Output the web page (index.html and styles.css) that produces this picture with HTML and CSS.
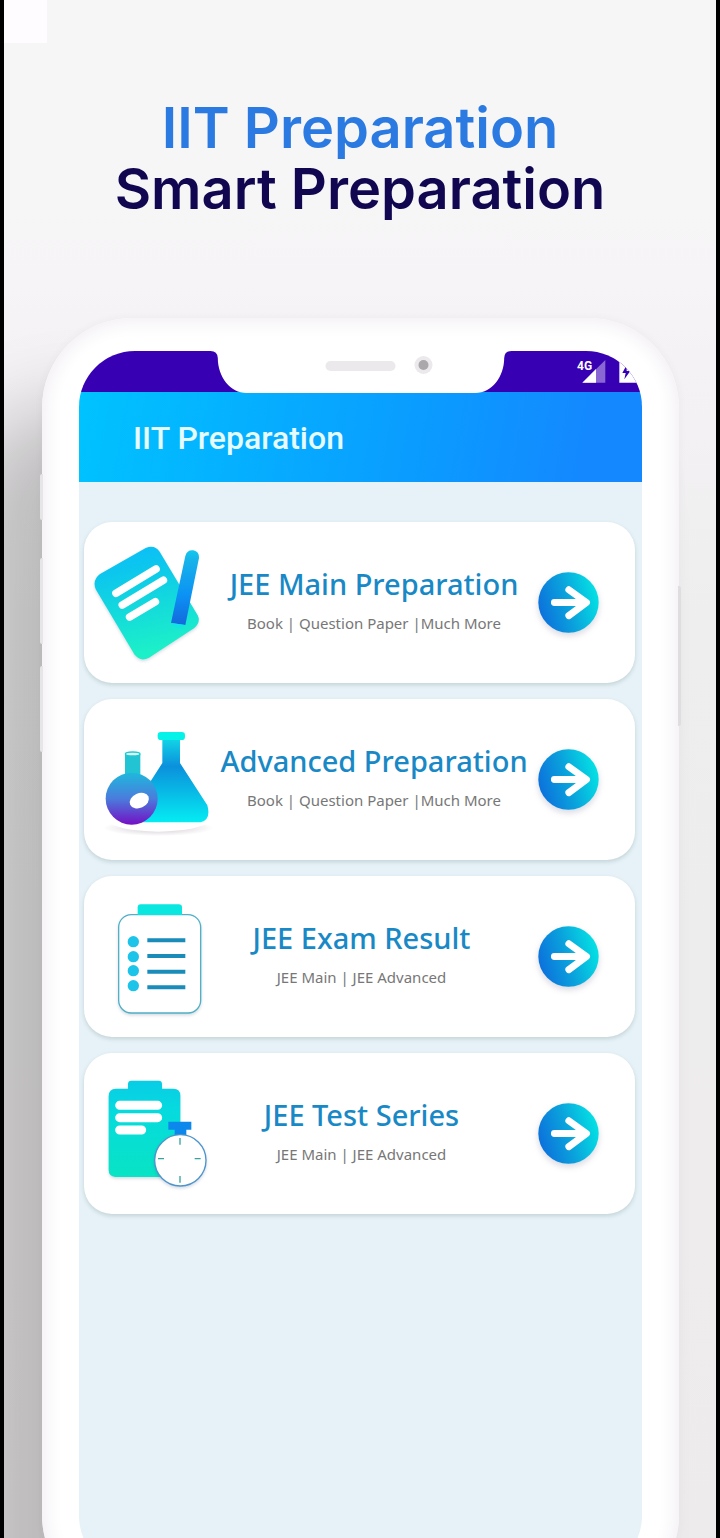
FILE: index.html
```html
<!DOCTYPE html>
<html lang="en">
<head>
<meta charset="utf-8">
<meta name="viewport" content="width=device-width, initial-scale=1">
<title>IIT Preparation</title>
<link rel="stylesheet" href="styles.css">
</head>
<body>
<div class="stage">
  <div class="corner-tile"></div>
  <header class="headline">
    <h1 class="headline-text"><span class="headline-accent">IIT Preparation</span><span>Smart Preparation</span></h1>
  </header>

  <div class="phone">
    <i class="side-key key-mute"></i>
    <i class="side-key key-up"></i>
    <i class="side-key key-down"></i>
    <i class="side-key key-power"></i>
    <div class="screen">
      <div class="status-bar">
        <svg class="status-icons" viewBox="648 153 198 123" aria-label="4G signal, battery charging">
          <text class="network" x="651" y="209">4G</text>
          <path d="M736 180V248H667Z" fill="#8a68d4"/>
          <path d="M708 207V248H667Z" fill="#fff"/>
          <path d="M778 174H846V248H778Z" fill="#fff"/>
          <path d="M800 195L787 219H797L793 238L811 213H800Z" fill="#3700b3"/>
        </svg>
      </div>
      <svg class="notch" viewBox="0 0 305 42" aria-hidden="true">
        <path d="M2 0Q9 0 9.3 7C9.3 26 22 42 38 42H267C283 42 295.7 26 295.7 7Q296 0 303 0Z" fill="#fff"/>
        <rect x="117" y="10" width="70" height="10" rx="5" fill="#ece9ec"/>
        <circle cx="215" cy="14" r="9" fill="#ebe9eb"/>
        <circle cx="215" cy="14" r="5" fill="#aaa8aa"/>
      </svg>
      <div class="app-bar"><h2 class="app-title">IIT Preparation</h2></div>

      <nav class="cards">
        <a class="card" href="#main">
          <svg class="card-icon" viewBox="12 33 393 483" aria-hidden="true">
            <defs>
              <linearGradient id="sheet" x1="0" y1="0" x2="0.2" y2="1"><stop offset="0" stop-color="#0bbcfb"/><stop offset=".25" stop-color="#0cc6ee"/><stop offset="1" stop-color="#1cf0c8"/></linearGradient>
              <linearGradient id="pen" x1="0" y1="0" x2="0" y2="1"><stop offset="0" stop-color="#12c8ee"/><stop offset=".14" stop-color="#18b2ea"/><stop offset=".6" stop-color="#0b92f4"/><stop offset="1" stop-color="#1468dc"/></linearGradient>
            </defs>
            <path class="lifted" d="M60 189L197 111Q223 99 239 122L353 313Q363 334 343 351L207 440Q181 454 163 430L48 236Q35 208 60 189Z" fill="url(#sheet)"/>
            <path d="M108 247L228 174M127 282L250 208M149 318L226 272" stroke="#fff" stroke-width="23" stroke-linecap="round"/>
            <path d="M316 135Q321 116 340 118Q358 122 357 141L316 342L273 336Z" fill="url(#pen)"/>
            <path d="M274 336L315 342Q305 352 290 350Q276 346 274 336Z" fill="#10e4e4"/>
          </svg>
          <div class="card-text"><h3 class="card-title">JEE Main Preparation</h3><p class="card-sub">Book | Question Paper |Much More</p></div>
          <svg class="card-arrow" viewBox="112 184 186 186" aria-hidden="true"><defs><linearGradient id="go" x1="0" y1=".7" x2="1" y2=".4"><stop offset="0" stop-color="#0c6edc"/><stop offset=".5" stop-color="#0aa2dc"/><stop offset="1" stop-color="#04e2e4"/></linearGradient></defs><circle cx="205" cy="277" r="92" fill="url(#go)"/><path d="M162 277H258M206 238L260 277L206 317" fill="none" stroke="#fff" stroke-width="21" stroke-linecap="round" stroke-linejoin="round"/></svg>
        </a>

        <a class="card" href="#advanced">
          <svg class="card-icon" viewBox="12 24 393 483" aria-hidden="true">
            <defs>
              <linearGradient id="cone" x1="0" y1="0" x2="0" y2="1"><stop offset="0" stop-color="#12d8e6"/><stop offset=".34" stop-color="#0b90dc"/><stop offset="1" stop-color="#04ecf2"/></linearGradient>
              <linearGradient id="bulb" x1="0" y1="0" x2="0" y2="1"><stop offset="0" stop-color="#1fb8dc"/><stop offset=".5" stop-color="#4a7cdc"/><stop offset="1" stop-color="#7410c4"/></linearGradient>
              <radialGradient id="floor"><stop offset="0" stop-color="#cfc6cf"/><stop offset="1" stop-color="#fff"/></radialGradient>
            </defs>
            <ellipse cx="235" cy="411" rx="165" ry="24" fill="url(#floor)"/>
            <path d="M78 388H392Q360 420 235 422Q110 420 78 388Z" fill="#fff"/>
            <path d="M247 140H300V216L382 343Q394 386 362 394H180V320L247 216Z" fill="url(#cone)"/>
            <rect x="233" y="123" width="82" height="24" rx="10" fill="#04f2e8"/>
            <path d="M135 190H181V256H135Z" fill="#22c4d4"/>
            <ellipse cx="158" cy="189" rx="22" ry="6" fill="#dffaf8" stroke="#18ccd2" stroke-width="4"/>
            <circle cx="155" cy="323" r="78" fill="url(#bulb)"/>
            <ellipse cx="178" cy="329" rx="30" ry="22" fill="#fff" transform="rotate(-24 178 329)"/>
          </svg>
          <div class="card-text"><h3 class="card-title">Advanced Preparation</h3><p class="card-sub">Book | Question Paper |Much More</p></div>
          <svg class="card-arrow" viewBox="112 184 186 186" aria-hidden="true"><circle cx="205" cy="277" r="92" fill="url(#go)"/><path d="M162 277H258M206 238L260 277L206 317" fill="none" stroke="#fff" stroke-width="21" stroke-linecap="round" stroke-linejoin="round"/></svg>
        </a>

        <a class="card card-short" href="#result">
          <svg class="card-icon" viewBox="12 18 393 483" aria-hidden="true">
            <rect class="lifted" x="116" y="134" width="246" height="295" rx="38" fill="#fff" stroke="#4fb0c6" stroke-width="4"/>
            <path d="M173 135V112Q173 103 182 103H296Q306 103 306 112V135Z" fill="#0ae6e0"/>
            <g fill="#1cc4ea"><circle cx="160" cy="215" r="17"/><circle cx="160" cy="260" r="17"/><circle cx="160" cy="302" r="17"/><circle cx="160" cy="347" r="17"/></g>
            <path d="M202 211H316M202 258H316M202 305H316M202 352H316" stroke="#1a8cba" stroke-width="12"/>
          </svg>
          <div class="card-text"><h3 class="card-title">JEE Exam Result</h3><p class="card-sub">JEE Main | JEE Advanced</p></div>
          <svg class="card-arrow" viewBox="112 184 186 186" aria-hidden="true"><circle cx="205" cy="277" r="92" fill="url(#go)"/><path d="M162 277H258M206 238L260 277L206 317" fill="none" stroke="#fff" stroke-width="21" stroke-linecap="round" stroke-linejoin="round"/></svg>
        </a>

        <a class="card card-short" href="#tests">
          <svg class="card-icon" viewBox="12 9 393 483" aria-hidden="true">
            <defs><linearGradient id="board" x1="0" y1="0" x2="0" y2="1"><stop offset="0" stop-color="#08cce6"/><stop offset=".3" stop-color="#06dade"/><stop offset="1" stop-color="#08e4c4"/></linearGradient></defs>
            <path class="lifted" d="M108 116H144V102Q144 92 154 92H236Q246 92 246 102V116H280Q301 116 301 137V381H106Q86 379 86 360V138Q86 117 108 116Z" fill="url(#board)"/>
            <path d="M119 166H233M119 203H233M119 240H185" stroke="#fff" stroke-width="27" stroke-linecap="round"/>
            <path d="M265 215H334V239H319V256H284V239H265Z" fill="#0c88ec"/>
            <circle class="lifted" cx="301" cy="331" r="77" fill="#fff" stroke="#4c94cc" stroke-width="4"/>
            <path d="M300 264V284M300 378V398M234 326H252M344 326H362" stroke="#36a49c" stroke-width="4"/>
          </svg>
          <div class="card-text"><h3 class="card-title">JEE Test Series</h3><p class="card-sub">JEE Main | JEE Advanced</p></div>
          <svg class="card-arrow" viewBox="112 184 186 186" aria-hidden="true"><circle cx="205" cy="277" r="92" fill="url(#go)"/><path d="M162 277H258M206 238L260 277L206 317" fill="none" stroke="#fff" stroke-width="21" stroke-linecap="round" stroke-linejoin="round"/></svg>
        </a>
      </nav>
    </div>
  </div>
</div>
</body>
</html>
```
FILE: styles.css
```css
* { box-sizing: border-box; }
body { margin: 0; background: #000; }
h1, h2, h3, p { margin: 0; }

.stage {
  position: relative;
  display: flex;
  flex-direction: column;
  min-height: 100vh;
  margin: 0 4px;
  overflow: hidden;
  background: linear-gradient(#f6f6f6 0, #f7f6f7 200px, #f5f2f5 360px, #eeeeee 620px, #eeebed 100%);
}
.corner-tile {
  position: absolute;
  top: 0;
  left: 0;
  width: 43px;
  height: 43px;
  background: #fffcff;
}

.headline { padding: 98px 16px; text-align: center; }
.headline-text {
  display: flex;
  flex-direction: column;
  font: 600 56px/61px Inter, sans-serif;
  color: #100750;
}
.headline-accent { color: #2a7ae2; }

.phone {
  position: relative;
  flex: 1 0 auto;
  display: flex;
  margin: 0 37px -67px 38px;
  padding: 33px 37px 33px 37px;
  border-radius: 90px;
  background: #fff;
  box-shadow:
    inset 0 0 16px 6px #f4f1f5,
    0 0 8px rgba(70, 60, 70, .05),
    -70px 90px 80px rgba(0, 0, 0, .21);
}
.side-key {
  position: absolute;
  left: -2px;
  width: 3px;
  border-radius: 2px 0 0 2px;
  background: #e6e5e7;
}
.key-mute { top: 156px; height: 46px; }
.key-up { top: 240px; height: 86px; }
.key-down { top: 348px; height: 86px; }
.key-power {
  top: 268px;
  right: -2px;
  left: auto;
  height: 140px;
  border-radius: 0 2px 2px 0;
  background: #dfdde0;
}

.screen {
  position: relative;
  flex: 1;
  overflow: hidden;
  border-radius: 56px;
  background: #e6f2f7;
}
.status-bar {
  display: flex;
  justify-content: flex-end;
  height: 41px;
  background: #3700b3;
}
.status-icons { width: 66px; height: 41px; }
.network { font: 700 36px Roboto, sans-serif; fill: #fff; }
.notch {
  position: absolute;
  top: 0;
  left: 50%;
  width: 305px;
  height: 42px;
  transform: translateX(-50%);
}
.app-bar {
  display: flex;
  align-items: center;
  height: 90px;
  padding: 2px 54px 0;
  background: linear-gradient(100deg, #00c3ff, #0a9cff 60%, #1488ff 90%);
}
.app-title { font: 500 32px/40px Roboto, sans-serif; color: #e6fbff; }

.cards {
  display: flex;
  flex-direction: column;
  gap: 16px;
  padding: 40px 7px 40px 5px;
}
.card {
  display: grid;
  grid-template-columns: 131px 1fr 97px;
  align-items: center;
  min-height: 161px;
  border-radius: 28px;
  background: #fff;
  box-shadow: 0 2px 4px rgba(60, 90, 90, .2);
  text-decoration: none;
}
.card-icon { width: 131px; height: 161px; }
.card-text { padding-right: 5px; text-align: center; white-space: nowrap; }
.card-short .card-text { padding-right: 30px; }
.card-title { font: 500 29px/40px "Noto Sans", sans-serif; color: #1889c6; }
.card-sub { font: 400 15px/38px "Noto Sans", sans-serif; color: #777; }
.card-arrow {
  width: 61px;
  height: 61px;
  overflow: visible;
  filter: drop-shadow(0 3px 3px rgba(60, 60, 110, .2));
}
.lifted { filter: drop-shadow(0 5px 5px rgba(50, 70, 110, .2)); }
```
